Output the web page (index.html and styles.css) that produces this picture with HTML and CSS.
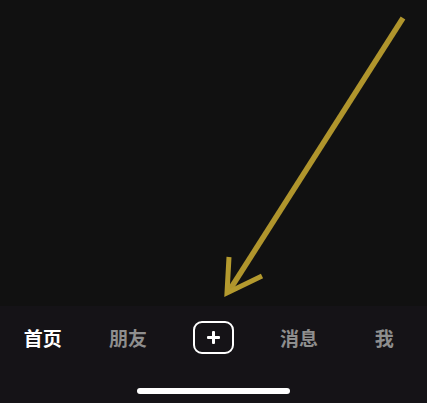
FILE: index.html
```html
<!DOCTYPE html>
<html lang="zh-CN">
<head>
  <meta charset="UTF-8" />
  <meta name="viewport" content="width=device-width, initial-scale=1.0"/>
  <title>首页</title>
  <link rel="stylesheet" href="styles.css">
</head>
<body>
  <div class="screen">
    <!-- 视频区域 (箭头提示) -->
    <div class="feed">
      <svg class="hint-arrow" viewBox="0 0 427 306" width="427" height="306">
        <defs>
          <linearGradient id="gold" x1="0" y1="0" x2="1" y2="1">
            <stop offset="0" stop-color="#b89d30"/>
            <stop offset="1" stop-color="#a88d28"/>
          </linearGradient>
        </defs>
        <line x1="403" y1="18" x2="229" y2="291" stroke="url(#gold)" stroke-width="5.5" stroke-linecap="butt"/>
        <polyline points="229,257 227,293 262,276" fill="none" stroke="#b49a2e" stroke-width="5" stroke-linejoin="miter" stroke-linecap="butt"/>
      </svg>
    </div>

    <!-- 底部导航 -->
    <nav class="tabbar">
      <ul class="tabs">
        <li class="tab active">首页</li>
        <li class="tab">朋友</li>
        <li class="tab"><span class="plus-btn"><span class="plus"></span></span></li>
        <li class="tab">消息</li>
        <li class="tab">我</li>
      </ul>
      <div class="home-indicator"></div>
    </nav>
  </div>
</body>
</html>
```

FILE: styles.css
```css
:root {
  --bg-dark: #111111;
  --bar-bg: #151317;
  --tab-gray: #8e8e8e;
}
body {
  margin: 0;
  background-color: var(--bg-dark);
  font-family: 'Noto Sans CJK SC', 'Noto Sans', sans-serif;
}
.screen {
  width: 427px;
  height: 403px;
  display: flex;
  flex-direction: column;
  overflow: hidden;
}
.feed {
  height: 306px;
  background-color: var(--bg-dark);
}
.hint-arrow {
  display: block;
}
/* 底部导航 */
.tabbar {
  flex: 1;
  background-color: var(--bar-bg);
  display: flex;
  flex-direction: column;
  align-items: center;
}
.tabs {
  list-style: none;
  margin: 0;
  padding: 0;
  width: 100%;
  height: 62px;
  display: grid;
  grid-template-columns: repeat(5, 1fr);
  align-items: center;
}
.tab {
  text-align: center;
  color: var(--tab-gray);
  font-size: 19px;
  font-weight: bold;
  line-height: 1;
  display: flex;
  justify-content: center;
  align-items: center;
}
.tab.active {
  color: #fff;
}
.plus-btn {
  width: 41px;
  height: 33px;
  box-sizing: border-box;
  border: 2.5px solid #fff;
  border-radius: 9px;
  display: flex;
  justify-content: center;
  align-items: center;
}
.plus {
  position: relative;
  width: 13px;
  height: 13px;
}
.plus::before, .plus::after {
  content: '';
  position: absolute;
  background: #fff;
  border-radius: 1px;
}
.plus::before {
  left: 5px;
  top: 0;
  width: 3px;
  height: 13px;
}
.plus::after {
  top: 5px;
  left: 0;
  width: 13px;
  height: 3px;
}
.home-indicator {
  margin-top: 20px;
  width: 153px;
  height: 6px;
  border-radius: 3px;
  background: #fff;
}
```
